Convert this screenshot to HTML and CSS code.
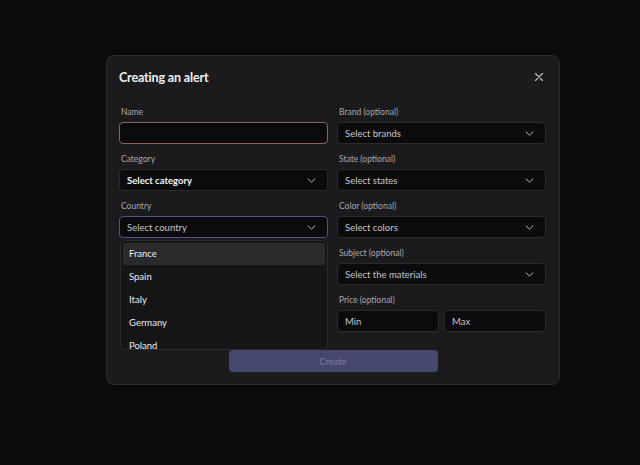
FILE: index.html
```html
<!DOCTYPE html>
<html lang="en">
<head>
<meta charset="utf-8">
<title>Creating an alert</title>
<link rel="stylesheet" href="styles.css">
</head>
<body>
<div class="modal">
  <div class="header">
    <h1 class="title">Creating an alert</h1>
    <button class="close" aria-label="Close">
      <svg width="10" height="10" viewBox="0 0 10 10"><path d="M1.5 1.5L8.5 8.5M8.5 1.5L1.5 8.5" stroke="#c4c4c8" stroke-width="1.1" stroke-linecap="round"/></svg>
    </button>
  </div>
  <div class="grid">
    <div class="col">
      <div class="field">
        <label class="label">Name</label>
        <div class="input input-error"></div>
      </div>
      <div class="field">
        <label class="label">Category</label>
        <div class="input select"><span class="value strong">Select category</span><svg class="chev" width="9" height="5" viewBox="0 0 9 5"><path d="M1 0.8l3.5 3.4 3.5-3.4" fill="none" stroke="#b8b8bc" stroke-width="1" stroke-linecap="round" stroke-linejoin="round"/></svg></div>
      </div>
      <div class="field country">
        <label class="label">Country</label>
        <div class="input select input-focus"><span class="value">Select country</span><svg class="chev" width="9" height="5" viewBox="0 0 9 5"><path d="M1 0.8l3.5 3.4 3.5-3.4" fill="none" stroke="#b8b8bc" stroke-width="1" stroke-linecap="round" stroke-linejoin="round"/></svg></div>
        <ul class="menu">
          <li class="opt active">France</li>
          <li class="opt">Spain</li>
          <li class="opt">Italy</li>
          <li class="opt">Germany</li>
          <li class="opt">Poland</li>
        </ul>
      </div>
    </div>
    <div class="col">
      <div class="field">
        <label class="label">Brand (optional)</label>
        <div class="input select"><span class="value">Select brands</span><svg class="chev" width="9" height="5" viewBox="0 0 9 5"><path d="M1 0.8l3.5 3.4 3.5-3.4" fill="none" stroke="#b8b8bc" stroke-width="1" stroke-linecap="round" stroke-linejoin="round"/></svg></div>
      </div>
      <div class="field">
        <label class="label">State (optional)</label>
        <div class="input select"><span class="value">Select states</span><svg class="chev" width="9" height="5" viewBox="0 0 9 5"><path d="M1 0.8l3.5 3.4 3.5-3.4" fill="none" stroke="#b8b8bc" stroke-width="1" stroke-linecap="round" stroke-linejoin="round"/></svg></div>
      </div>
      <div class="field">
        <label class="label">Color (optional)</label>
        <div class="input select"><span class="value">Select colors</span><svg class="chev" width="9" height="5" viewBox="0 0 9 5"><path d="M1 0.8l3.5 3.4 3.5-3.4" fill="none" stroke="#b8b8bc" stroke-width="1" stroke-linecap="round" stroke-linejoin="round"/></svg></div>
      </div>
      <div class="field">
        <label class="label">Subject (optional)</label>
        <div class="input select"><span class="value">Select the materials</span><svg class="chev" width="9" height="5" viewBox="0 0 9 5"><path d="M1 0.8l3.5 3.4 3.5-3.4" fill="none" stroke="#b8b8bc" stroke-width="1" stroke-linecap="round" stroke-linejoin="round"/></svg></div>
      </div>
      <div class="field">
        <label class="label">Price (optional)</label>
        <div class="pair">
          <div class="input"><span class="value">Min</span></div>
          <div class="input"><span class="value">Max</span></div>
        </div>
      </div>
    </div>
  </div>
  <div class="footer">
    <button class="create">Create</button>
  </div>
</div>
</body>
</html>
```
FILE: styles.css
```css
* { box-sizing: border-box; }
html, body { margin: 0; padding: 0; }
body {
  background: #0b0b0c;
  width: 640px;
  height: 465px;
  overflow: hidden;
  font-family: "Lato", "Inter", sans-serif;
  color: #e6e6e8;
}
.modal {
  margin: 55px 0 0 106px;
  width: 454px;
  height: 330px;
  background: #1b1b1d;
  border: 1px solid #2c2c2f;
  border-radius: 8px;
  padding: 12px;
  display: flex;
  flex-direction: column;
}
.header {
  display: flex;
  align-items: center;
  justify-content: space-between;
  height: 19px;
  margin-bottom: 20px;
}
.title {
  margin: 0;
  font-size: 12.5px;
  font-weight: 700;
  color: #f2f2f4;
  letter-spacing: -0.15px;
}
.close {
  background: none;
  border: 0;
  padding: 0;
  width: 10px;
  height: 10px;
  margin-right: 3px;
  display: flex;
}
.grid {
  display: grid;
  grid-template-columns: 209px 209px;
  column-gap: 9px;
}
.col {
  display: flex;
  flex-direction: column;
  gap: 9px;
}
.field {
  display: flex;
  flex-direction: column;
  gap: 4px;
}
.country { position: relative; }
.label {
  font-size: 8.5px;
  line-height: 12px;
  color: #a8a8ae;
  padding-left: 2px;
}
.input {
  height: 22px;
  background: #0b0b0d;
  border: 1px solid #2b2b2e;
  border-radius: 4px;
  display: flex;
  align-items: center;
  justify-content: space-between;
  padding: 0 11px 0 7px;
}
.input-error { border-color: #8e5f63; }
.input-focus { border-color: #50528e; }
.value {
  font-size: 9.5px;
  color: #c6c6ca;
}
.value.strong { color: #f4f4f6; font-weight: 700; }
.chev { display: block; }
.pair {
  display: grid;
  grid-template-columns: 1fr 1fr;
  gap: 5px;
}
.menu {
  position: absolute;
  left: 1px;
  top: 40px;
  width: 208px;
  height: 110px;
  margin: 0;
  padding: 2px;
  list-style: none;
  background: #151517;
  border: 1px solid #2b2b2e;
  border-radius: 4px;
  overflow: hidden;
  z-index: 2;
}
.opt {
  height: 23px;
  line-height: 22px;
  padding-left: 6px;
  font-size: 9.5px;
  color: #ececee;
  border-radius: 3px;
}
.opt.active { background: #2a2a2d; height: 22px; margin-bottom: 1px; }
.footer {
  display: flex;
  justify-content: center;
  margin-top: 18px;
}
.create {
  width: 209px;
  height: 22px;
  background: #45476f;
  border: 0;
  border-radius: 4px;
  font-family: inherit;
  font-size: 9.5px;
  color: #7c7e9e;
}
```
